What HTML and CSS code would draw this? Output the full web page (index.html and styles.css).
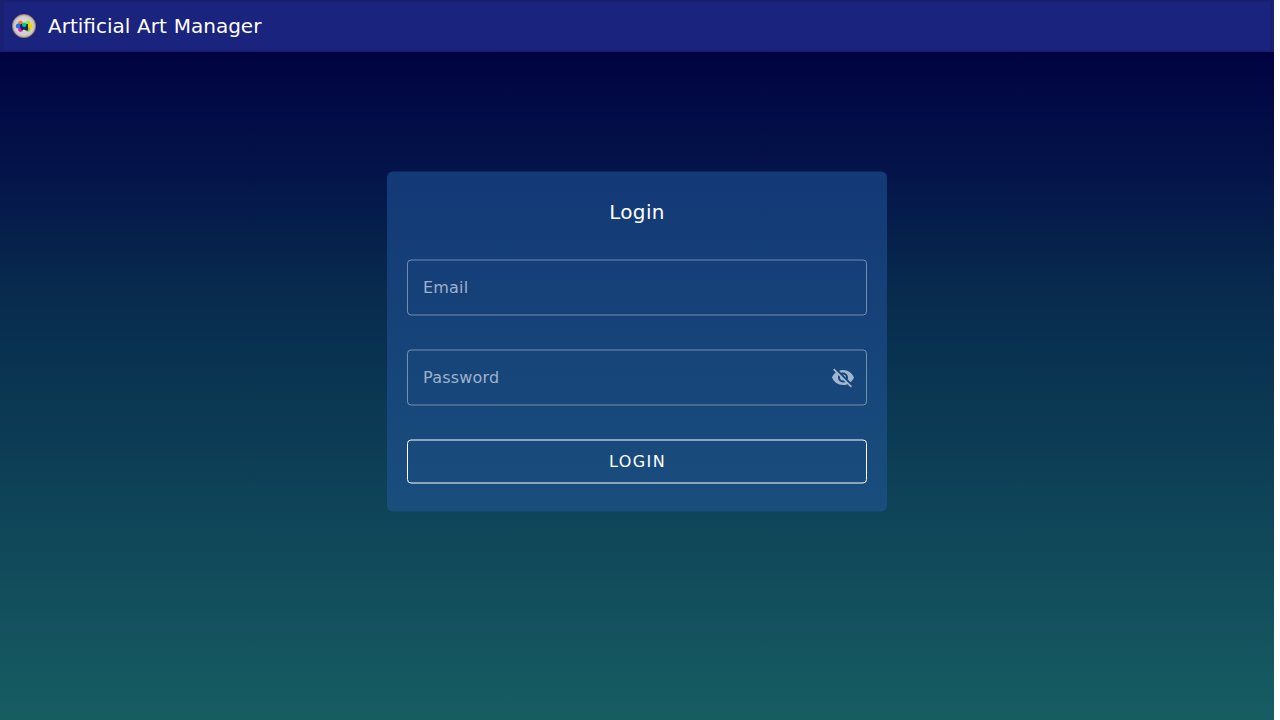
FILE: index.html
```html
<!DOCTYPE html>
<html lang="en">
<head>
<meta charset="utf-8">
<title>Artificial Art Manager</title>
<link rel="stylesheet" href="styles.css">
</head>
<body>
<div class="app">
  <header class="bar">
    <svg class="logo" viewBox="0 0 24 24" aria-hidden="true">
      <defs>
        <radialGradient id="disc">
          <stop offset="0" stop-color="#e6e6e4"/>
          <stop offset=".8" stop-color="#cfcdcb"/>
          <stop offset="1" stop-color="#b9aaa2"/>
        </radialGradient>
      </defs>
      <circle cx="12" cy="12" r="11.6" fill="url(#disc)" stroke="#9c7766" stroke-width=".8"/>
      <circle cx="8.5" cy="9.2" r="2.5" fill="#f07825"/>
      <circle cx="15.9" cy="9.1" r="2.4" fill="#a5e51d"/>
      <circle cx="6.3" cy="12" r="2.5" fill="#1676ee"/>
      <circle cx="18" cy="12.2" r="2.6" fill="#ffcf00"/>
      <circle cx="8.6" cy="15.5" r="2.4" fill="#e816bd"/>
      <circle cx="15.8" cy="15.6" r="2.4" fill="#8fd01e"/>
      <path d="M8.5 10h7.5v6.5h-2.2l-1.8-1-2 1L8 13z" fill="#102958"/>
      <circle cx="12.2" cy="10.8" r="2.2" fill="#00c9a1"/>
    </svg>
    <h1 class="brand">Artificial Art Manager</h1>
  </header>
  <main class="content">
    <form class="card">
      <h2 class="title">Login</h2>
      <label class="field"><span class="label">Email</span></label>
      <label class="field"><span class="label">Password</span>
        <svg class="eye" viewBox="0 0 24 24" aria-hidden="true"><path d="M11.83,9L15,12.16C15,12.11 15,12.05 15,12A3,3 0 0,0 12,9C11.94,9 11.89,9 11.83,9M7.53,9.8L9.08,11.35C9.03,11.56 9,11.77 9,12A3,3 0 0,0 12,15C12.22,15 12.44,14.97 12.65,14.92L14.2,16.47C13.53,16.8 12.79,17 12,17A5,5 0 0,1 7,12C7,11.21 7.2,10.47 7.53,9.8M2,4.27L4.28,6.55L4.73,7C3.08,8.3 1.78,10 1,12C2.73,16.39 7,19.5 12,19.5C13.55,19.5 15.03,19.2 16.38,18.66L16.81,19.08L19.73,22L21,20.73L3.27,3M12,7A5,5 0 0,1 17,12C17,12.64 16.87,13.26 16.64,13.82L19.57,16.75C21.07,15.5 22.27,13.86 23,12C21.27,7.61 17,4.5 12,4.5C10.6,4.5 9.26,4.75 8,5.2L10.17,7.35C10.74,7.13 11.35,7 12,7Z"/></svg>
      </label>
      <button class="submit" type="button">LOGIN</button>
    </form>
  </main>
</div>
</body>
</html>
```
FILE: styles.css
```css
* { box-sizing: border-box; }
body { margin: 0; background: #fff; font-family: "DejaVu Sans", sans-serif; color: #fff; }
.app {
  width: 1274px;
  height: 720px;
  display: flex;
  flex-direction: column;
  background: linear-gradient(#000340 52px, #04134a 170px, #07294d 280px, #0c3c55 440px, #114b5b 570px, #165d62 720px);
}
.bar {
  height: 52px;
  display: flex;
  align-items: center;
  padding: 0 8px;
  gap: 12px;
  background: #1a237e;
  border: solid #1a2071;
  border-width: 2px 4px;
}
.logo { width: 24px; height: 24px; }
.brand, .title { margin: 0; font-size: 20px; font-weight: 400; line-height: 32px; }
.brand { word-spacing: .5px; }
.content { flex: 1; display: flex; justify-content: center; align-items: flex-start; padding-top: 120px; }
.card {
  width: 500px;
  height: 340px;
  padding: 24px 20px 28px;
  border-radius: 6px;
  background: linear-gradient(#133976, #194e7d);
  transform: translateY(-.5px);
}
.title { text-align: center; letter-spacing: .35px; margin-bottom: 32px; }
.field {
  display: flex;
  align-items: center;
  justify-content: space-between;
  height: 56px;
  margin-bottom: 34px;
  padding: 0 11px 0 15px;
  border: 1px solid rgba(255,255,255,.4);
  border-radius: 4px;
  color: #9eb2cb;
  font-size: 16px;
  letter-spacing: .2px;
}
.label { padding-bottom: 1px; }
.eye { width: 24px; height: 24px; fill: #a1b5cf; }
.submit {
  display: block;
  width: 100%;
  height: 44px;
  padding: 0 0 1px 1px;
  border: 1px solid #fff;
  border-radius: 4px;
  background: none;
  color: #fff;
  font: 16px "DejaVu Sans", sans-serif;
  letter-spacing: 1.43px;
}
```
